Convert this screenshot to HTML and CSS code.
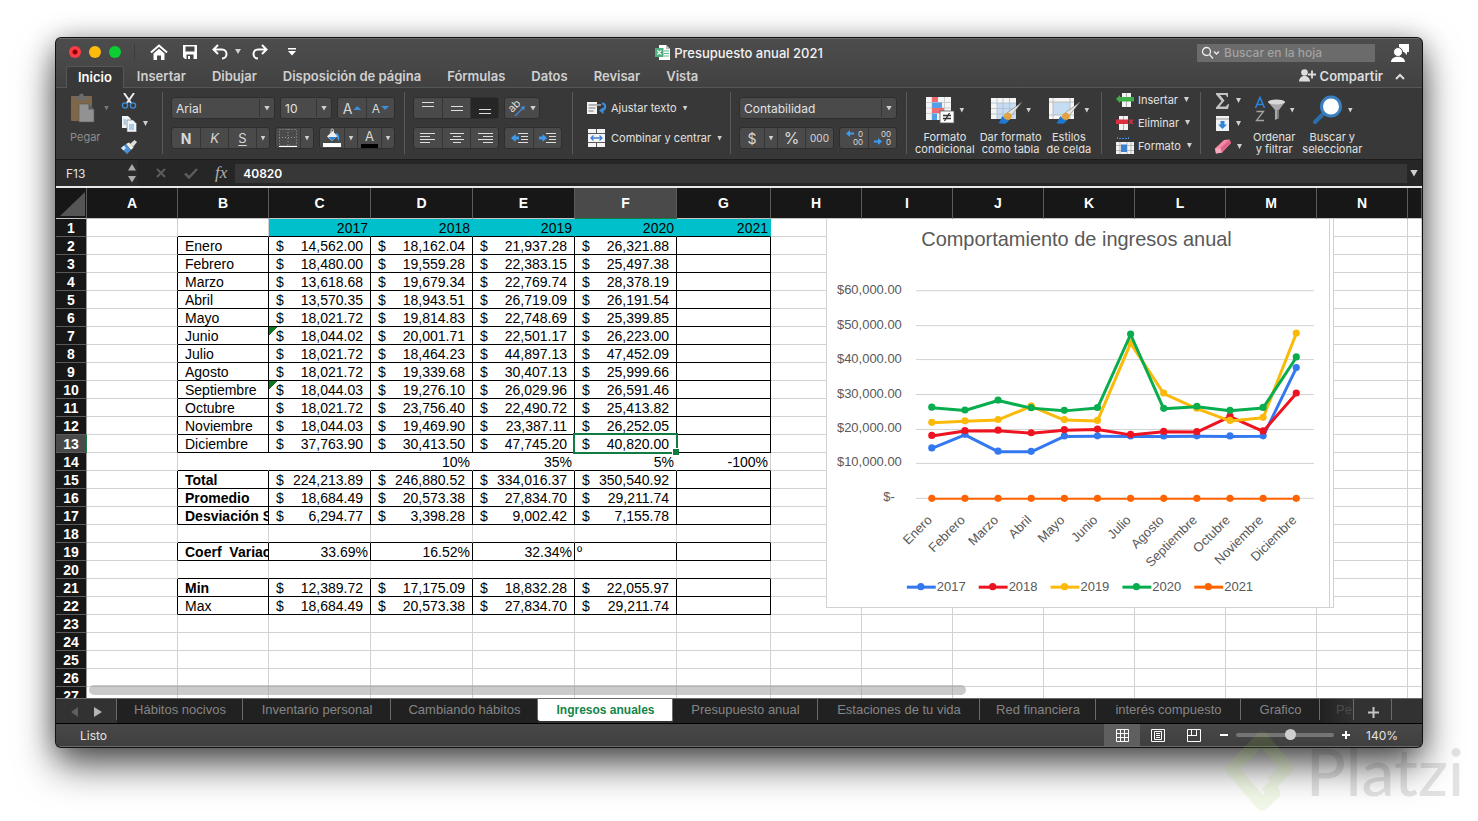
FILE: index.html
```html
<!DOCTYPE html>
<html lang="es">
<head>
    <meta charset="UTF-8">
    <meta name="viewport" content="width=device-width, initial-scale=1.0">
    <title>Presupuesto anual 2021</title>
    <link rel="stylesheet" href="styles.css">
</head>
<body>

<main class="window">

    <header class="titlebar">
        <div class="quick">
            <span class="light red"></span>
            <span class="light yellow"></span>
            <span class="light green"></span>
            <span class="quick-line"></span>
            <button class="icon-btn" aria-label="Inicio">
                <svg width="18" height="16" viewBox="0 0 18 16"><path d="M1 8.500 9 1.500l8 7" fill="none" stroke="#fff" stroke-width="2"/><path d="M3.500 9.500 9 4.800l5.500 4.700V16H11v-4.500H7V16H3.500z" fill="#fff"/></svg>
            </button>
            <button class="icon-btn" aria-label="Guardar">
                <svg width="16" height="16" viewBox="0 0 16 16"><path d="M1 1h14v14H3l-2-2z" fill="#fff"/><path d="M3.500 2.500h9v5h-9zM4.500 10.500h7V15h-7z" fill="#464646"/><path d="M6 12h2v3H6z" fill="#fff"/></svg>
            </button>
            <button class="icon-btn" aria-label="Deshacer">
                <svg width="16" height="16" viewBox="0 0 16 16"><path d="M6 1 1.500 5.500 6 10M1.500 5.500H10c6 0 6 9 0 9" fill="none" stroke="#fff" stroke-width="2"/></svg>
            </button>
            <span class="caret undo-caret"></span>
            <button class="icon-btn" aria-label="Rehacer">
                <svg width="16" height="16" viewBox="0 0 16 16"><path d="M10 1l4.500 4.500L10 10M14.500 5.500H6c-6 0-6 9 0 9" fill="none" stroke="#fff" stroke-width="2"/></svg>
            </button>
            <button class="icon-btn more" aria-label="Personalizar">
                <svg width="8" height="8" viewBox="0 0 8 8"><path d="M0 0h8v1.500H0zM0 3h8L4 7.500z" fill="#fff"/></svg>
            </button>
        </div>
        <h1 class="title">
            <svg width="15" height="15" viewBox="0 0 15 15"><path d="M4 0h7l4 4v11H4z" fill="#fff"/><path d="M11 0v4h4z" fill="#bbb"/><path d="M9 6h5M9 8.500h5M9 11h5" stroke="#5fb88a"/><path d="M0 3h8.500v9H0z" fill="#4fae7f"/><path d="M2.300 5.300 6.200 9.700M6.200 5.300 2.300 9.700" stroke="#fff" stroke-width="1.200"/></svg>
            Presupuesto anual 2021
        </h1>
        <div class="title-right">
            <label class="search">
                <svg width="19" height="14" viewBox="0 0 19 14"><circle cx="5.500" cy="5.500" r="4" fill="none" stroke="#eee" stroke-width="1.300"/><path d="M8.500 8.500 12 12.500M13 5.500l2.500 2.500L18 5.500" fill="none" stroke="#eee" stroke-width="1.300"/></svg>
                <input type="text" placeholder="Buscar en la hoja" aria-label="Buscar en la hoja">
            </label>
            <svg width="18" height="18" viewBox="0 0 18 18"><path d="M8 0h10v8h-2v3l-3-3H8z" fill="#fff"/><circle cx="7" cy="8" r="4.500" fill="#fff" stroke="#484848"/><path d="M0 18c0-7 14-7 14 0z" fill="#fff"/></svg>
        </div>
    </header>

    <nav class="tabs">
        <button class="tab active">Inicio</button>
        <button class="tab">Insertar</button>
        <button class="tab">Dibujar</button>
        <button class="tab">Disposición de página</button>
        <button class="tab">Fórmulas</button>
        <button class="tab">Datos</button>
        <button class="tab">Revisar</button>
        <button class="tab">Vista</button>
        <button class="share">
            <svg width="17" height="13" viewBox="0 0 17 13"><circle cx="5.500" cy="3.500" r="3.300" fill="#ddd"/><path d="M0 12.500C0 5 11 5 11 12.500z" fill="#ddd"/><path d="M13 1.500v8M9 5.500h8" stroke="#ddd" stroke-width="1.800"/></svg>
            Compartir
        </button>
        <button class="icon-btn" aria-label="Contraer">
            <svg width="10" height="7" viewBox="0 0 10 7"><path d="M1 6l4-4 4 4" fill="none" stroke="#ddd" stroke-width="2"/></svg>
        </button>
    </nav>

    <section class="ribbon">
        <div class="group clipboard">
            <button class="big paste">
                <span class="big-icon">
                    <svg width="26" height="30" viewBox="0 0 26 30"><rect x="1" y="3" width="21" height="25" rx="1" fill="#7d6748"/><path d="M5 7V3.500h4c0-4 5-4 5 0h4V7z" fill="#6b6b6b"/><path d="M9 11h9.500l5.500 5.500V29H9z" fill="#929292" stroke="#555" stroke-width=".6"/><path d="M18.500 11v5.500H24z" fill="#5c5c5c"/></svg>
                    <i class="caret"></i>
                </span>
                Pegar
            </button>
            <div class="stack">
                <button class="line" aria-label="Cortar">
                    <svg width="16" height="16" viewBox="0 0 16 16"><path d="M3 0l7 10M13 0 6 10" stroke="#eee" stroke-width="2"/><circle cx="4" cy="12.500" r="2.600" fill="none" stroke="#3d8edb" stroke-width="1.300"/><circle cx="12" cy="12.500" r="2.600" fill="none" stroke="#3d8edb" stroke-width="1.300"/></svg>
                </button>
                <button class="line" aria-label="Copiar">
                    <svg width="16" height="16" viewBox="0 0 16 16"><path d="M1 0h6l3 3v9H1z" fill="#eef4fa"/><path d="M6 4h6l3.500 3.500V16H6z" fill="#eef4fa" stroke="#666" stroke-width=".6"/><path d="M2.500 4H5M2.500 6H5M2.500 8H5M8 9h5M8 11h5M8 13h5" stroke="#6fa3d2"/></svg>
                    <i class="caret"></i>
                </button>
                <button class="line" aria-label="Copiar formato">
                    <svg width="16" height="14" viewBox="0 0 16 14"><path d="M9 4l4.500-4L16 2l-4 5z" fill="#ddd"/><path d="M5 4l3-1.500 4.500 5L10 10z" fill="#f6efe2"/><path d="M0 8l5-4 5 6-4 4z" fill="#4b90d6"/><path d="M0 8l3-2.500 2 2.500-2.500 2.500z" fill="#d9e8f6"/></svg>
                </button>
            </div>
        </div>

        <div class="group font">
            <div class="row">
                <span class="combo family"><select aria-label="Fuente"><option>Arial</option></select><i class="caret"></i></span>
                <span class="combo size"><select aria-label="Tamaño"><option>10</option></select><i class="caret"></i></span>
                <span class="seg">
                    <button class="w28" aria-label="Aumentar"><span class="letter">A</span><i class="up"></i></button>
                    <button class="w28" aria-label="Disminuir"><span class="letter small">A</span><i class="down"></i></button>
                </span>
            </div>
            <div class="row">
                <span class="seg">
                    <button class="w28"><b>N</b></button>
                    <button class="w28"><em>K</em></button>
                    <button class="w28"><u>S</u></button>
                    <button class="w13" aria-label="Subrayado"><i class="caret"></i></button>
                </span>
                <span class="seg">
                    <button class="w24" aria-label="Bordes">
                        <svg width="18" height="18" viewBox="0 0 18 18"><path d="M.5.5h17v16H.5zM9 0v17M0 8.500h18" fill="none" stroke="#999" stroke-dasharray="1 2"/><path d="M0 17.500h18" stroke="#fff"/></svg>
                    </button>
                    <button class="w13" aria-label="Más bordes"><i class="caret"></i></button>
                </span>
                <span class="seg">
                    <button class="w24" aria-label="Relleno">
                        <svg width="18" height="20" viewBox="0 0 18 20"><path d="M4 8.500 9.500 3l5 5-5.500 5z" fill="#eee"/><path d="M5.500 9h8l-4.500 4z" fill="#2b84d8"/><path d="M8 6V2.500C8 .5 10.500.5 10.500 2.500V5" fill="none" stroke="#ddd"/><path d="M13 5c3 1 4 4 2.500 8-1.500-2-.5-5-3-6.500z" fill="#49a0ee"/><path d="M0 15h18v4H0z" fill="#fff"/></svg>
                    </button>
                    <button class="w13" aria-label="Más rellenos"><i class="caret"></i></button>
                    <button class="w24 fontcolor"><span class="letter">A</span></button>
                    <button class="w13" aria-label="Más colores"><i class="caret"></i></button>
                </span>
            </div>
        </div>

        <div class="group align">
            <div class="row">
                <span class="seg">
                    <button class="w28" aria-label="Arriba"><svg width="14" height="14" viewBox="0 0 14 14"><path d="M1 1.500h12M1 5.500h12" stroke="#ddd"/></svg></button>
                    <button class="w28" aria-label="Medio"><svg width="14" height="14" viewBox="0 0 14 14"><path d="M1 5.500h12M1 9.500h12" stroke="#ddd"/></svg></button>
                    <button class="w28 pressed" aria-label="Abajo"><svg width="14" height="14" viewBox="0 0 14 14"><path d="M1 8.500h12M1 12.500h12" stroke="#ddd"/></svg></button>
                </span>
                <span class="seg">
                    <button class="w34">
                        <svg class="orient" width="18" height="18" viewBox="0 0 18 18"><text x="0" y="10" transform="rotate(-45 7 7)" font-size="11" fill="#ddd">ab</text><path d="M7 17 15 9" stroke="#3d8edb" stroke-width="1.300"/><path d="M17 7l-1 4.500L12.500 8z" fill="#3d8edb"/></svg>
                        <i class="caret"></i>
                    </button>
                </span>
            </div>
            <div class="row">
                <span class="seg">
                    <button class="w28" aria-label="Izquierda"><svg width="16" height="12" viewBox="0 0 16 12"><path d="M0 1.500h15M0 4.500h10M0 7.500h15M0 10.500h10" stroke="#ddd"/></svg></button>
                    <button class="w28" aria-label="Centro"><svg width="16" height="12" viewBox="0 0 16 12"><path d="M1 1.500h14M4 4.500h8M1 7.500h14M4 10.500h8" stroke="#ddd"/></svg></button>
                    <button class="w28" aria-label="Derecha"><svg width="16" height="12" viewBox="0 0 16 12"><path d="M1 1.500h15M6 4.500h10M1 7.500h15M6 10.500h10" stroke="#ddd"/></svg></button>
                </span>
                <span class="seg">
                    <button class="w28" aria-label="Menos sangría"><svg width="17" height="12" viewBox="0 0 17 12"><path d="M7 1.500h10M10 4.500h7M10 7.500h7M7 10.500h10" stroke="#ddd"/><path d="M0 6l4.500-4v2.500H8v3H4.500V10z" fill="#3d9bf0"/></svg></button>
                    <button class="w28" aria-label="Más sangría"><svg width="17" height="12" viewBox="0 0 17 12"><path d="M7 1.500h10M10 4.500h7M10 7.500h7M7 10.500h10" stroke="#ddd"/><path d="M8 6 3.500 2v2.500H0v3h3.500V10z" fill="#3d9bf0"/></svg></button>
                </span>
            </div>
        </div>

        <div class="group wrap">
            <button class="line">
                <svg width="20" height="16" viewBox="0 0 20 16"><path d="M0 2h10v12H0z" fill="#f2f2f2"/><path d="M1.500 5H10M1.500 8h7M1.500 11h5" stroke="#777"/><path d="M10 5h4" stroke="#eee"/><path d="M15 3.500c4 0 4.500 6 0 7" fill="none" stroke="#3d8edb" stroke-width="2"/><path d="M16.500 7v7L12 10.500z" fill="#3d8edb"/></svg>
                Ajustar texto <i class="caret"></i>
            </button>
            <button class="line">
                <svg width="20" height="18" viewBox="0 0 20 18"><path d="M1 0h17v18H1z" fill="#f4f4f4"/><path d="M1 4.500h17M1 13.500h17M9.500 0v4.500M9.500 13.500V18" stroke="#555"/><path d="M4 9h11M6.500 6.500 4 9l2.500 2.500M12.500 6.500 15 9l-2.500 2.500" fill="none" stroke="#3d7fd0" stroke-width="1.300"/></svg>
                Combinar y centrar <i class="caret"></i>
            </button>
        </div>

        <div class="group number">
            <div class="row">
                <span class="combo format"><select aria-label="Formato de número"><option>Contabilidad</option></select><i class="caret"></i></span>
            </div>
            <div class="row">
                <span class="seg">
                    <button class="w24">$</button>
                    <button class="w13" aria-label="Monedas"><i class="caret"></i></button>
                    <button class="w28 pct">%</button>
                    <button class="w28 zeros">000</button>
                </span>
                <span class="seg">
                    <button class="w28 dec"><span><svg width="8" height="7" viewBox="0 0 8 7"><path d="M0 3.500 4 0v2.500h4v2H4V7z" fill="#3d9bf0"/></svg> 0</span><span>00</span></button>
                    <button class="w28 dec"><span>00</span><span><svg width="8" height="7" viewBox="0 0 8 7"><path d="M8 3.500 4 0v2.500H0v2h4V7z" fill="#3d9bf0"/></svg> 0</span></button>
                </span>
            </div>
        </div>

        <div class="group styles">
            <button class="big">
                <span class="big-icon">
                    <svg width="30" height="28" viewBox="0 0 30 28"><path d="M1 1h25v23H1z" fill="#f5f5f5"/><path d="M1 6.500h25M1 12h25M1 17.500h25M7 1v23M19.500 1v23" stroke="#c4c4c4" stroke-width=".8"/><path d="M7 1h6v5H7zM7 12h12v5H7z" fill="#ee6b73"/><path d="M7 6.500h10V12H7zM7 17.500h5V24H7z" fill="#559fe6"/><rect x="15" y="15" width="14" height="12" fill="#fff" stroke="#555" stroke-width=".8"/><path d="M18 19.500h8M18 22.500h8M24.500 17l-5 8" stroke="#333" stroke-width="1.300"/></svg>
                    <i class="caret"></i>
                </span>
                Formato<br>condicional
            </button>
            <button class="big">
                <span class="big-icon">
                    <svg width="32" height="28" viewBox="0 0 32 28"><path d="M1 2h25v21H1z" fill="#f5f5f5"/><path d="M7 7h19v16H7z" fill="#c5dcf2"/><path d="M1 7h25M1 12.500h25M1 18h25M7 2v21M13 2v21M19.500 2v21" stroke="#aebdcb" stroke-width=".8"/><path d="M32 6 21 20l-4-3z" fill="#e4e4e4" stroke="#666" stroke-width=".5"/><path d="M16 17c6-2 8 5 3 7-4 2-8-3-3-7z" fill="#e0a243"/><path d="M13 20c1 3 3 4 6 4-2 5-7 4-11 3 3-1 2-5 5-7z" fill="#1f78d1"/></svg>
                    <i class="caret"></i>
                </span>
                Dar formato<br>como tabla
            </button>
            <button class="big">
                <span class="big-icon">
                    <svg width="32" height="28" viewBox="0 0 32 28"><path d="M1 2h25v21H1z" fill="#f5f5f5"/><path d="M5 6h17v13H5z" fill="#c5dcf2"/><path d="M1 6h25M1 19h25M5 2v21M22 2v21" stroke="#b5b5b5" stroke-width=".8"/><path d="M32 6 21 20l-4-3z" fill="#e4e4e4" stroke="#666" stroke-width=".5"/><path d="M16 17c6-2 8 5 3 7-4 2-8-3-3-7z" fill="#e0a243"/><path d="M13 20c1 3 3 4 6 4-2 5-7 4-11 3 3-1 2-5 5-7z" fill="#1f78d1"/></svg>
                    <i class="caret"></i>
                </span>
                Estilos<br>de celda
            </button>
        </div>

        <div class="group cells">
            <button class="line">
                <svg width="18" height="14" viewBox="0 0 18 14"><path d="M6 0h9v14H6z" fill="#f2f2f2"/><path d="M10.500 0v14" stroke="#888" stroke-width=".6"/><path d="M0 6l4-4v2h14v4.500H4V10z" fill="#3fae49"/></svg>
                Insertar <i class="caret"></i>
            </button>
            <button class="line">
                <svg width="18" height="14" viewBox="0 0 18 14"><path d="M3 0h9v14H3z" fill="#f2f2f2"/><path d="M7.500 0v14" stroke="#888" stroke-width=".6"/><path d="M0 3.500h12V8H0z" fill="#dc2f3d"/><path d="M13 3.500l4 4.500M17 3.500 13 8" stroke="#dc2f3d" stroke-width="1.300"/></svg>
                Eliminar <i class="caret"></i>
            </button>
            <button class="line">
                <svg width="18" height="17" viewBox="0 0 18 17"><path d="M1.500 0v3M12.500 0v3M3 1.500h8" stroke="#3d8edb" stroke-dasharray="2 1"/><path d="M0 5h18v12H0z" fill="#f2f2f2"/><path d="M0 8.500h18M0 13.500h18M4 5v12M11 5v12M15 5v12" stroke="#999" stroke-width=".6"/><path d="M5 7.500h6V15H5z" fill="#3d7fd0"/></svg>
                Formato <i class="caret"></i>
            </button>
        </div>

        <div class="group edit">
            <div class="stack">
                <button class="line" aria-label="Autosuma">
                    <svg width="15" height="16" viewBox="0 0 15 16"><path d="M1 0h12v4h-1l-1-2H5l4.500 5.500L4.500 13.500H11l2-2.500h1l-1 5H1v-1.500L6.500 8 1 1.500z" fill="#c4c4c4"/></svg>
                    <i class="caret"></i>
                </button>
                <button class="line" aria-label="Rellenar">
                    <svg width="15" height="15" viewBox="0 0 15 15"><path d="M1 0h13v15H1z" fill="#f2f2f2"/><path d="M1 3h13" stroke="#999"/><path d="M5.500 5h4v3.500H12L7.500 13 3 8.500h2.500z" fill="#3284d6"/></svg>
                    <i class="caret"></i>
                </button>
                <button class="line" aria-label="Borrar">
                    <svg width="16" height="15" viewBox="0 0 16 15"><path d="M0 9.500 9 1l5.500-.5L16 4l-9 9.500-6 1z" fill="#f48aa5"/><path d="M0 9.500l5.500-.5L7 13.500l-6 1z" fill="#f7a9bd"/><path d="M5.500 9l9-8.500L16 4l-9 9.500z" fill="#e06487"/></svg>
                    <i class="caret"></i>
                </button>
            </div>
            <button class="big">
                <span class="big-icon">
                    <svg width="32" height="28" viewBox="0 0 32 28"><path d="M1.500 12 6 1.500 10.500 12M3 8.500h6" fill="none" stroke="#2b84d8" stroke-width="1.600"/><path d="M2.500 15.500h7l-7 9h7.500" fill="none" stroke="#a5a5a5" stroke-width="1.300"/><path d="M14 6h17l-6 8v8l-4 2V14z" fill="#a9a9a9"/><ellipse cx="22.500" cy="6" rx="8.500" ry="2.500" fill="#d8d8d8"/><path d="M23 14h2v8l-2 1z" fill="#7b7b7b"/></svg>
                    <i class="caret"></i>
                </span>
                Ordenar<br>y filtrar
            </button>
            <button class="big">
                <span class="big-icon">
                    <svg width="32" height="30" viewBox="0 0 32 30"><path d="M12 18 3 27" stroke="#2d6dab" stroke-width="4" stroke-linecap="round"/><circle cx="19" cy="11.500" r="9.500" fill="#fff" stroke="#3b7fc0" stroke-width="3"/></svg>
                    <i class="caret"></i>
                </span>
                Buscar y<br>seleccionar
            </button>
        </div>
    </section>

    <section class="formula-bar">
        <div class="name-box">
            <input type="text" value="F13" aria-label="Cuadro de nombres">
            <svg width="8" height="20" viewBox="0 0 8 20"><path d="M4 1l4 6.500H0zM4 19.500 0 13h8z" fill="#ababab"/></svg>
        </div>
        <svg width="12" height="12" viewBox="0 0 12 12"><path d="M2 2l8 8M10 2l-8 8" stroke="#5c5c5c" stroke-width="2"/></svg>
        <svg width="14" height="12" viewBox="0 0 14 12"><path d="M1 6.500 5 10.500 13 2" fill="none" stroke="#5c5c5c" stroke-width="2.500"/></svg>
        <span class="fx">fx</span>
        <input class="formula" type="text" value="40820" aria-label="Fórmula">
        <i class="caret big-caret"></i>
    </section>

    <section class="sheet">
        <table id="grid">
            <colgroup>
                <col class="c-head"><col class="c-std"><col class="c-std">
                <col class="c-wide"><col class="c-wide"><col class="c-wide"><col class="c-wide">
                <col class="c-g">
                <col class="c-std"><col class="c-std"><col class="c-std"><col class="c-std">
                <col class="c-std"><col class="c-std"><col class="c-std"><col>
            </colgroup>
            <thead></thead>
            <tbody></tbody>
        </table>
        <div class="chart">
            <svg id="chart" viewBox="0 0 503 388" width="503" height="388"></svg>
        </div>
        <div class="scrollbar"></div>
    </section>

    <nav class="sheets">
        <button class="arrows" aria-label="Desplazar hojas">
            <svg width="34" height="12" viewBox="0 0 34 12"><path d="M8 1v10L1 6z" fill="#5f5f5f"/><path d="M24 1v10l8-5z" fill="#b5b5b5"/></svg>
        </button>
        <button>Hábitos nocivos</button>
        <button>Inventario personal</button>
        <button>Cambiando hábitos</button>
        <button class="current">Ingresos anuales</button>
        <button>Presupuesto anual</button>
        <button>Estaciones de tu vida</button>
        <button>Red financiera</button>
        <button>interés compuesto</button>
        <button>Grafico</button>
        <button class="fade">Pe</button>
        <button class="add" aria-label="Nueva hoja"><svg width="11" height="11" viewBox="0 0 11 11"><path d="M5.500 0v11M0 5.500h11" stroke="#c4c4c4" stroke-width="2"/></svg></button>
        <span></span>
    </nav>

    <footer class="status">
        <span class="ready">Listo</span>
        <button class="view on" aria-label="Normal"><svg width="13" height="13" viewBox="0 0 13 13"><path d="M.5.5h12v12H.5zM4.500 0v13M8.500 0v13M0 4.500h13M0 8.500h13" fill="none" stroke="#fff"/></svg></button>
        <button class="view" aria-label="Diseño de página"><svg width="14" height="13" viewBox="0 0 14 13"><path d="M.5.5h13v12H.5zM3.500 2.500h7v8h-7zM5 4.500h4M5 6.500h4M5 8.500h4" fill="none" stroke="#fff"/></svg></button>
        <button class="view" aria-label="Salto de página"><svg width="14" height="13" viewBox="0 0 14 13"><path d="M.5.5h13v12H.5zM4.500 0v6.500M9.500 0v6.500M0 6.500h10" fill="none" stroke="#fff"/></svg></button>
        <button class="zoom-btn" aria-label="Alejar"><svg width="8" height="8" viewBox="0 0 8 8"><path d="M0 4h8" stroke="#fff" stroke-width="2"/></svg></button>
        <input class="zoom" type="range" min="10" max="240" value="140" aria-label="Zoom">
        <button class="zoom-btn" aria-label="Acercar"><svg width="8" height="8" viewBox="0 0 8 8"><path d="M0 4h8M4 0v8" stroke="#fff" stroke-width="2"/></svg></button>
        <span class="percent">140%</span>
    </footer>
</main>

<div class="watermark">
    <svg width="72" height="84" viewBox="0 0 72 84"><path d="M48 54 63 39 38 9 8 40 38 75 50 64 42 56" fill="none" stroke="#98ca3f" stroke-width="13" stroke-linejoin="round"/></svg>
    <span>Platzi</span>
</div>

<script src="script.js"></script>
</body>
</html>
```
FILE: styles.css
```css
* {
    box-sizing: border-box;
}

body {
    margin: 0;
    padding: 38px 56px 74px;
    height: 100vh;
    overflow: hidden;
    background: #fff;
    font-family: Inter, 'Liberation Sans', sans-serif;
    font-size: 12px;
    color: #e2e2e2;
}

button, input, select {
    margin: 0;
    padding: 0;
    border: none;
    background: none;
    color: inherit;
    font: inherit;
    outline: none;
}

button {
    display: flex;
    align-items: center;
    justify-content: center;
    white-space: nowrap;
}

svg {
    display: block;
    flex: none;
}

.window {
    display: flex;
    flex-direction: column;
    height: 100%;
    overflow: hidden;
    border-radius: 5px;
    background: #383838;
    box-shadow: 0 0 0 1px #111, 0 18px 38px rgba(0, 0, 0, 0.65), 0 2px 26px rgba(0, 0, 0, 0.3);
}

.caret {
    flex: none;
    width: 6px;
    height: 5px;
    background: #d0d0d0;
    clip-path: polygon(0 0, 100% 0, 50% 100%);
}

/* title bar */
.titlebar {
    display: grid;
    grid-template-columns: 1fr auto 1fr;
    align-items: center;
    height: 28px;
    background: linear-gradient(#4c4c4c, #474747);
    border-top: 1px solid #6c6c6c;
}

.quick {
    display: flex;
    align-items: center;
    gap: 8px;
    padding-left: 13px;
    margin-top: -2px;
}

.light {
    width: 12px;
    height: 12px;
    border-radius: 50%;
}

.red {
    background: radial-gradient(#8c0000 2px, #fc3b45 3px);
}

.yellow {
    background: #fdbc0b;
}

.green {
    background: #0ccf34;
}

.quick-line {
    width: 1px;
    height: 16px;
    margin: 0 7px 0 5px;
    background: #3c3c3c;
}

.quick .icon-btn {
    margin-right: 6px;
}

.quick .undo-caret {
    margin: 0 3px 0 -7px;
}

.quick .more {
    margin-left: 6px;
}

.title {
    display: flex;
    align-items: center;
    gap: 4px;
    margin: 0;
    font-size: 13px;
    font-weight: 500;
    color: #f2f2f2;
}

.title-right {
    display: flex;
    align-items: center;
    justify-content: flex-end;
    gap: 16px;
    padding-right: 13px;
}

.search {
    display: flex;
    align-items: center;
    gap: 4px;
    width: 178px;
    height: 18px;
    padding-left: 4px;
    background: #6b6b6b;
    border-radius: 1px;
}

.search input {
    width: 140px;
    font-weight: 500;
}

.search input::placeholder {
    color: #a2a2a2;
}

/* ribbon tabs */
.tabs {
    display: flex;
    height: 22px;
    padding: 0 17px 0 10px;
    background: linear-gradient(#474747, #414141);
    border-bottom: 1px solid #565656;
}

.tab {
    padding: 0 13px 2px;
    font-size: 13px;
    font-weight: 600;
    color: #d0d0d0;
}

.tab.active {
    margin-bottom: -1px;
    padding: 0 11px 2px;
    background: #383838;
    border: 1px solid #565656;
    border-bottom: none;
    border-radius: 3px 3px 0 0;
    color: #fff;
}

.share {
    gap: 4px;
    margin: 0 12px 2px auto;
    font-size: 13px;
    font-weight: 600;
    color: #dcdcdc;
}

/* ribbon */
.ribbon {
    display: flex;
    flex: none;
    height: 72px;
    background: #383838;
    border-bottom: 1px solid #1c1c1c;
}

.group {
    display: flex;
    flex: none;
    padding: 9px 8px 0;
    position: relative;
}

.group:not(:last-child)::after {
    content: "";
    position: absolute;
    top: 4px;
    right: 0;
    width: 1px;
    height: 62px;
    background: #5a5a5a;
}

.font, .align, .number, .wrap, .cells {
    flex-direction: column;
    gap: 8px;
}

.clipboard { width: 107px; padding: 5px 0 0 14px; gap: 12px; }
.font { width: 242px; }
.align { width: 168px; }
.wrap { width: 158px; padding-left: 14px; }
.number { width: 176px; }
.styles { width: 195px; padding: 6px 0 0 8px; gap: 5px; }
.cells { width: 99px; padding: 1px 0 0 14px; gap: 2px; }
.edit { flex: 1; padding: 2px 0 0 14px; }

.row {
    display: flex;
    gap: 5px;
}

.combo {
    display: flex;
    align-items: center;
    height: 22px;
    padding-right: 4px;
    background: #4a4a4a;
    border: 1px solid #2e2e2e;
    border-radius: 3px;
}

.combo select {
    flex: 1;
    height: 18px;
    margin-right: 4px;
    padding-left: 4px;
    border-right: 1px solid #363636;
    appearance: none;
}

.family { width: 104px; }
.size { width: 52px; }
.format { width: 158px; }

.seg {
    display: flex;
    height: 22px;
    background: #4a4a4a;
    border: 1px solid #2e2e2e;
    border-radius: 3px;
}

.seg button {
    color: #d8d8d8;
    font-size: 14px;
}

.seg button + button {
    border-left: 1px solid #363636;
}

.seg .pressed {
    background: #262626;
}

.seg .w34 { width: 34px; gap: 4px; }
.seg .w28 { width: 28px; }
.seg .w24 { width: 24px; }
.seg .w13 { width: 13px; }

.seg .w13 .caret {
    width: 5px;
}

.orient {
    overflow: visible;
}

.seg .zeros {
    font-size: 10px;
}

.seg .pct {
    font-size: 16px;
}

.seg .dec {
    flex-direction: column;
    align-items: flex-end;
    padding-right: 5px;
    font-size: 8px;
    line-height: 8px;
}

.dec span {
    display: flex;
    gap: 4px;
}

.seg em {
    font-size: 13px;
}

.seg u {
    font-size: 13px;
    text-underline-offset: 2px;
}

.letter.small {
    font-size: 12px;
}

.up, .down {
    width: 8px;
    height: 4px;
    margin-left: 1px;
    background: #3d8edb;
}

.up { clip-path: polygon(0 100%, 50% 0, 100% 100%); }
.down { clip-path: polygon(0 0, 100% 0, 50% 100%); }

.fontcolor .letter {
    border-bottom: 4px solid #000;
    padding: 0 4px;
    line-height: 15px;
    font-size: 13px;
}

.line {
    justify-content: flex-start;
    gap: 4px;
    height: 21px;
    font-size: 11px;
}

.line .caret {
    width: 5px;
    margin-left: 2px;
}

.wrap .line {
    height: 22px;
}

.stack {
    display: flex;
    flex-direction: column;
    gap: 2px;
    width: 38px;
}

.clipboard .stack {
    margin-top: -3px;
}

.big {
    flex-direction: column;
    justify-content: flex-start;
    align-self: flex-start;
    font-size: 11px;
    line-height: 12px;
}

.big-icon {
    display: flex;
    align-items: center;
    gap: 4px;
    height: 30px;
    margin: 1px 0 6px;
}

.edit .big {
    padding-top: 4px;
    margin-right: 7px;
}

.big .caret {
    width: 5px;
}

.paste {
    align-items: flex-start;
    color: #8d8d8d;
}

.paste .big-icon {
    gap: 8px;
    margin: 0 0 8px;
}

.paste .caret {
    background: #777;
}

/* formula bar */
.formula-bar {
    display: flex;
    flex: none;
    align-items: center;
    gap: 17px;
    height: 28px;
    background: #262626;
    border-bottom: 2px solid #e8e8e8;
    padding-right: 4px;
}

.name-box {
    display: flex;
    align-items: center;
    width: 82px;
    height: 26px;
    padding: 0 2px 0 10px;
    background: #2b2b2b;
}

.name-box input {
    flex: 1;
    width: 40px;
}

.fx {
    font-family: 'Liberation Serif', serif;
    font-size: 17px;
    font-style: italic;
    color: #b0b0b0;
}

.formula {
    flex: 1;
    height: 19px;
    margin-left: -9px;
    margin-right: -14px;
    padding-left: 8px;
    background: #373737;
    font-weight: 600;
    color: #fff;
}

.big-caret {
    width: 8px;
    height: 7px;
}

/* spreadsheet */
.sheet {
    position: relative;
    flex: 1;
    min-height: 0;
    overflow: hidden;
    background: #fff;
    font-family: 'Liberation Sans', Arial, sans-serif;
    color: #000;
}

#grid {
    width: 100%;
    table-layout: fixed;
    border-collapse: separate;
    border-spacing: 0;
    font-size: 14px;
    line-height: 15px;
}

.c-head { width: 31px; }
.c-std { width: 91px; }
.c-wide { width: 102px; }
.c-g { width: 94px; }

#grid th {
    padding: 0;
    background: #171717;
    color: #fff;
    border-right: 1px solid #5a5a5a;
    border-bottom: 1px solid #5a5a5a;
}

#grid thead th {
    height: 31px;
    border-bottom-color: #c4c4c4;
}

#grid tbody th {
    height: 18px;
    padding-top: 2px;
    border-right-color: #9a9a9a;
}

#grid thead .hot {
    background: #4a4a4a;
    border-bottom-color: #107c41;
}

#grid tbody .hot {
    background: #4a4a4a;
    border-right-color: #107c41;
}

.corner::after {
    content: "";
    display: block;
    width: 25px;
    height: 24px;
    margin: 2px 0 0 4px;
    background: #555;
    clip-path: polygon(100% 0, 100% 100%, 0 100%);
}

#grid td {
    height: 18px;
    padding: 2px 2px 0;
    overflow: hidden;
    white-space: nowrap;
    border-right: 1px solid #d2d2d2;
    border-bottom: 1px solid #d2d2d2;
}

#grid .label {
    padding-left: 7px;
    padding-right: 0;
}

#grid .num {
    text-align: right;
}

#grid .money {
    padding-left: 7px;
    padding-right: 7px;
}

.money div {
    display: flex;
    justify-content: space-between;
}

#grid .year {
    background: #00c0cb;
    border-right-color: #00c0cb;
}

#grid .noline {
    border-right-color: #fff;
}

#grid .line-r {
    border-right-color: #000;
}

#grid .line-b {
    border-bottom-color: #000;
}

#grid .warn {
    background: linear-gradient(135deg, #0a7a1c 6px, transparent 6px);
}

#grid .selected {
    position: relative;
    overflow: visible;
}

.selected::before {
    content: "";
    position: absolute;
    inset: -2px;
    border: 2px solid #107c41;
}

.selected::after {
    content: "";
    position: absolute;
    right: -3px;
    bottom: -3px;
    width: 6px;
    height: 6px;
    background: #107c41;
    border: 1px solid #fff;
    border-width: 1px 0 0 1px;
}

/* the chart floats over the cells */
.chart {
    position: absolute;
    left: 770px;
    top: 31px;
    width: 508px;
    background: #fff;
    border: 1px solid #d2d2d2;
    border-top: none;
}

.chart svg {
    border-right: 1px solid #d2d2d2;
}

.chart text {
    font-size: 13px;
    fill: #595959;
}

.chart .chart-title {
    font-size: 20px;
}

.scrollbar {
    position: absolute;
    left: 33px;
    bottom: 3px;
    width: 877px;
    height: 10px;
    border-radius: 5px;
    background: rgba(150, 150, 150, 0.5);
}

/* sheet tabs */
.sheets {
    display: grid;
    flex: none;
    grid-template-columns: 61px 126px 148px 147px 135px 145px 162px 116px 145px 79px 34px 38px 1fr;
    height: 26px;
    background: #323232;
    border-top: 1px solid #6a6a6a;
    border-bottom: 1px solid #000;
    font-family: 'Liberation Sans', Arial, sans-serif;
    font-size: 13px;
    color: #858585;
}

.sheets button {
    position: relative;
    padding-bottom: 3px;
    background: #212121;
    overflow: hidden;
}

.sheets button::after {
    content: "";
    position: absolute;
    top: 0;
    right: 0;
    width: 1px;
    height: 21px;
    background: #6a6a6a;
}

.sheets .arrows, .sheets .add {
    background: #323232;
    padding-top: 2px;
    padding-bottom: 0;
}

.sheets .current {
    height: 22px;
    padding-bottom: 1px;
    background: #fff;
    border-radius: 0 0 2px 2px;
    font-weight: bold;
    font-size: 12px;
    color: #12854a;
}

.sheets .fade {
    justify-content: flex-end;
    padding-right: 2px;
    background: linear-gradient(90deg, #212121, #323232);
    color: #4c4c4c;
}

/* status bar */
.status {
    display: flex;
    flex: none;
    align-items: center;
    height: 23px;
    padding-right: 24px;
    background: linear-gradient(#484848, #3f3f3f);
    border-bottom: 1px solid #6a6a6a;
}

.ready {
    flex: 1;
    padding-left: 24px;
}

.view {
    width: 36px;
    height: 22px;
}

.view.on {
    background: #5f5f5f;
}

.zoom-btn {
    width: 24px;
    height: 22px;
}

.zoom {
    width: 98px;
    height: 12px;
    appearance: none;
}

.zoom::-webkit-slider-runnable-track {
    height: 4px;
    border-radius: 2px;
    background: #757575;
}

.zoom::-webkit-slider-thumb {
    appearance: none;
    width: 11px;
    height: 11px;
    margin-top: -4px;
    border-radius: 50%;
    background: #cfcfcf;
}

.percent {
    width: 40px;
    text-align: right;
}

.watermark {
    position: absolute;
    right: 14px;
    bottom: 8px;
    display: flex;
    align-items: center;
    gap: 10px;
    opacity: 0.12;
    pointer-events: none;
    font-family: Lato, sans-serif;
    font-size: 66px;
    font-weight: 500;
    line-height: 60px;
    color: #222;
}
```
FILE: script.js
```js
const months = ['Enero', 'Febrero', 'Marzo', 'Abril', 'Mayo', 'Junio', 'Julio', 'Agosto', 'Septiembre', 'Octubre', 'Noviembre', 'Diciembre'];

const income = {
    2017: [14562.00, 18480.00, 13618.68, 13570.35, 18021.72, 18044.02, 18021.72, 18021.72, 18044.03, 18021.72, 18044.03, 37763.90],
    2018: [18162.04, 19559.28, 19679.34, 18943.51, 19814.83, 20001.71, 18464.23, 19339.68, 19276.10, 23756.40, 19469.90, 30413.50],
    2019: [21937.28, 22383.15, 22769.74, 26719.09, 22748.69, 22501.17, 44897.13, 30407.13, 26029.96, 22490.72, 23387.11, 47745.20],
    2020: [26321.88, 25497.38, 28378.19, 26191.54, 25399.85, 26223.00, 47452.09, 25999.66, 26591.46, 25413.82, 26252.05, 40820.00],
    2021: [0, 0, 0, 0, 0, 0, 0, 0, 0, 0, 0, 0]
};

const colors = { 2017: '#3478f0', 2018: '#ee1320', 2019: '#fbba0a', 2020: '#08ad4e', 2021: '#ff6300' };

// ---- cells: row number -> values from column B on ----
const rows = {
    1: ['', '2017', '2018', '2019', '2020', '2021'],
    14: ['', '', '10%', '35%', '5%', '-100%'],
    15: ['Total', 224213.89, 246880.52, 334016.37, 350540.92],
    16: ['Promedio', 18684.49, 20573.38, 27834.70, 29211.74],
    17: ['Desviación S', 6294.77, 3398.28, 9002.42, 7155.78],
    19: ['Coerf  Variac', '33.69%', '16.52%', '32.34%', 'º'],
    21: ['Min', 12389.72, 17175.09, 18832.28, 22055.97],
    22: ['Max', 18684.49, 20573.38, 27834.70, 29211.74]
};
months.forEach((name, i) => {
    rows[i + 2] = [name, income[2017][i], income[2018][i], income[2019][i], income[2020][i]];
});

const boldRows = [15, 16, 17, 19, 21];

// cells B..G of the boxed rows have black lines
function boxed(row, col) {
    const inRow = (row >= 2 && row <= 13) || (row >= 15 && row <= 17) || row === 19 || row === 21 || row === 22;
    return inRow && col >= 2 && col <= 7;
}

function money(value) {
    return value.toLocaleString('en-US', { minimumFractionDigits: 2, maximumFractionDigits: 2 });
}

const letters = 'ABCDEFGHIJKLMN'.split('');
let head = '<tr><th class="corner"></th>';
letters.forEach(l => {
    head += `<th${l === 'F' ? ' class="hot"' : ''}>${l}</th>`;
});
document.querySelector('#grid thead').innerHTML = head + '<th></th></tr>';

let body = '';
for (let r = 1; r <= 27; r++) {
    body += `<tr><th${r === 13 ? ' class="hot"' : ''}>${r}</th>`;
    for (let c = 1; c <= 15; c++) {
        const value = rows[r] && rows[r][c - 2] !== undefined ? rows[r][c - 2] : '';
        const cls = [];
        let html = value;
        if (c === 2) {
            cls.push('label');
            if (boldRows.includes(r)) html = `<b>${value.replace('  ', '&nbsp; ')}</b>`;
        } else if (typeof value === 'number') {
            cls.push('money');
            html = `<div><span>$</span><span>${money(value)}</span></div>`;
        } else if (value !== 'º') {
            cls.push('num');
        }
        if (r === 1 && c >= 3 && c <= 7) cls.push('year');
        if (r === 14 && c >= 2 && c <= 6) cls.push('noline');
        if (boxed(r, c) || boxed(r, c + 1)) cls.push('line-r');
        if (boxed(r, c) || boxed(r + 1, c)) cls.push('line-b');
        if (c === 3 && (r === 7 || r === 10)) cls.push('warn');
        if (c === 6 && r === 13) cls.push('selected');
        body += `<td class="${cls.join(' ')}">${html}</td>`;
    }
    body += '</tr>';
}
document.querySelector('#grid tbody').innerHTML = body;

// ---- chart ----
const zeroY = 280;
const stepY = 34.7;
const firstX = 105;
const stepX = 33.2;
const x = i => firstX + i * stepX;
const y = v => zeroY - v / 10000 * stepY;

let svg = '<text class="chart-title" x="250" y="27" text-anchor="middle">Comportamiento de ingresos anual</text>';

for (let k = 0; k <= 6; k++) {
    const ly = Math.round(y(k * 10000)) - 0.5;
    const label = k ? '$' + k + '0,000.00' : '$-';
    svg += `<path d="M89 ${ly}H488" stroke="#d2d2d2"/>`;
    svg += `<text x="${k ? 75 : 68}" y="${ly + 3}" text-anchor="end">${label}</text>`;
}

Object.keys(income).forEach((year, n) => {
    const pts = income[year].map((v, i) => [x(i), y(v)]);
    svg += `<polyline points="${pts.join(' ')}" fill="none" stroke="${colors[year]}" stroke-width="${year === '2021' ? 2 : 3}" stroke-linejoin="round"/>`;
    pts.forEach(p => {
        svg += `<circle cx="${p[0]}" cy="${p[1] - 0.5}" r="3.600" fill="${colors[year]}"/>`;
    });

    const lx = 80 + n * 72;
    svg += `<path d="M${lx} 368.500h29" stroke="${colors[year]}" stroke-width="3"/>`;
    svg += `<circle cx="${lx + 14}" cy="368" r="3.600" fill="${colors[year]}"/>`;
    svg += `<text x="${lx + 30}" y="372">${year}</text>`;
});

months.forEach((name, i) => {
    const tx = x(i) + 1;
    svg += `<text x="${tx}" y="302" text-anchor="end" transform="rotate(-45 ${tx} 302)">${name}</text>`;
});

document.getElementById('chart').innerHTML = svg;
```
